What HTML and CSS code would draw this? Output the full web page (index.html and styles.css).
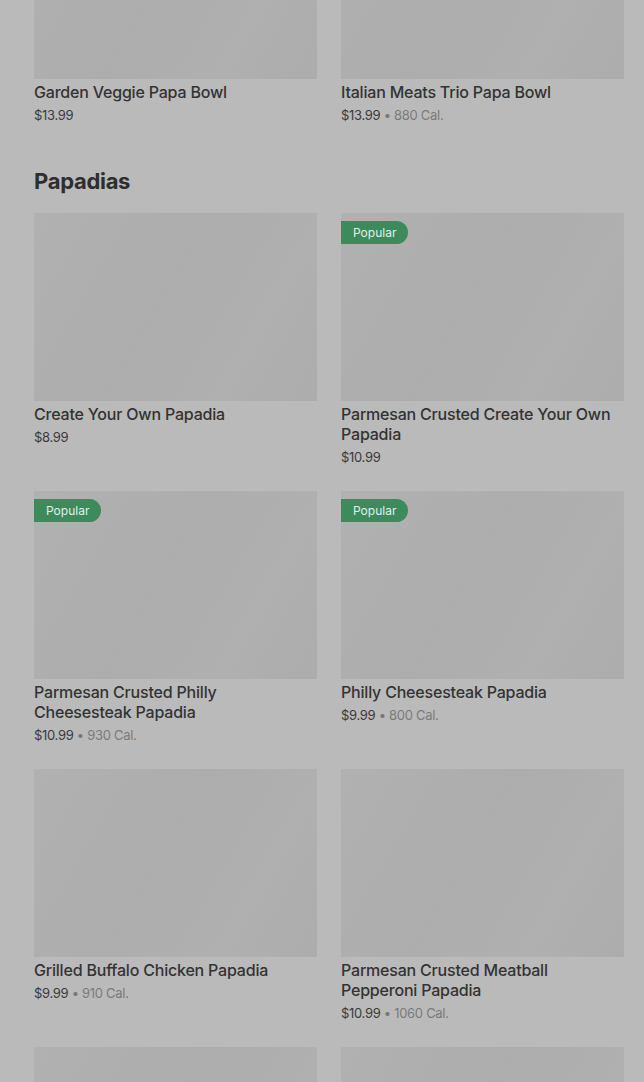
FILE: index.html
```html
<!DOCTYPE html>
<html lang="en">
<head>
  <meta charset="UTF-8">
  <meta name="viewport" content="width=device-width, initial-scale=1.0">
  <title>Papadias</title>
  <link rel="stylesheet" href="styles.css">
</head>
<body>
  <div class="menu">
    <section class="section first">
      <div class="grid">
        <div class="card">
          <div class="photo"></div>
          <div class="name">Garden Veggie Papa Bowl</div>
          <div class="meta"><span class="price">$13.99</span></div>
        </div>
        <div class="card">
          <div class="photo"></div>
          <div class="name">Italian Meats Trio Papa Bowl</div>
          <div class="meta"><span class="price">$13.99</span> • <span class="cal">880 Cal.</span></div>
        </div>
      </div>
    </section>

    <section class="section">
      <h2>Papadias</h2>
      <div class="grid">
        <div class="card">
          <div class="photo"></div>
          <div class="name">Create Your Own Papadia</div>
          <div class="meta"><span class="price">$8.99</span></div>
        </div>
        <div class="card">
          <div class="photo"><span class="badge">Popular</span></div>
          <div class="name">Parmesan Crusted Create Your Own Papadia</div>
          <div class="meta"><span class="price">$10.99</span></div>
        </div>
        <div class="card">
          <div class="photo"><span class="badge">Popular</span></div>
          <div class="name">Parmesan Crusted Philly Cheesesteak Papadia</div>
          <div class="meta"><span class="price">$10.99</span> • <span class="cal">930 Cal.</span></div>
        </div>
        <div class="card">
          <div class="photo"><span class="badge">Popular</span></div>
          <div class="name">Philly Cheesesteak Papadia</div>
          <div class="meta"><span class="price">$9.99</span> • <span class="cal">800 Cal.</span></div>
        </div>
        <div class="card">
          <div class="photo"></div>
          <div class="name">Grilled Buffalo Chicken Papadia</div>
          <div class="meta"><span class="price">$9.99</span> • <span class="cal">910 Cal.</span></div>
        </div>
        <div class="card">
          <div class="photo"></div>
          <div class="name">Parmesan Crusted Meatball Pepperoni Papadia</div>
          <div class="meta"><span class="price">$10.99</span> • <span class="cal">1060 Cal.</span></div>
        </div>
        <div class="card">
          <div class="photo"></div>
        </div>
        <div class="card">
          <div class="photo"></div>
        </div>
      </div>
    </section>
  </div>
</body>
</html>
```

FILE: styles.css
```css
body {
  margin: 0;
  background-color: #bababa;
  color: #333;
  font-family: Inter, "Liberation Sans", sans-serif;
  overflow: hidden;
}

.menu {
  padding: 0 20px 0 34px;
  margin-top: -109px;
}

.section.first {
  margin-bottom: 42px;
}

h2 {
  margin: 0 0 18px;
  font-size: 22px;
  line-height: 28px;
  font-weight: 700;
  letter-spacing: -0.3px;
  color: #2e2e2e;
}

.grid {
  display: grid;
  grid-template-columns: 1fr 1fr;
  column-gap: 24px;
  row-gap: 24px;
}

.photo {
  position: relative;
  height: 188px;
  background: linear-gradient(120deg, #b1b1b1 0%, #adadad 45%, #b0b0b0 75%, #acacac 100%);
}

.badge {
  position: absolute;
  top: 8px;
  left: 0;
  padding: 0 12px;
  height: 23px;
  line-height: 23px;
  font-size: 12px;
  color: #e4eee8;
  background-color: #3d8a5c;
  border-radius: 0 12px 12px 0;
}

.name {
  margin-top: 3px;
  font-size: 16px;
  line-height: 20px;
  font-weight: 500;
  color: #333;
  letter-spacing: -0.2px;
}

.meta {
  margin-top: 3px;
  font-size: 13px;
  line-height: 20px;
  color: #777;
  letter-spacing: -0.3px;
}

.price {
  color: #3a3a3a;
}

.cal {
  color: #7a7a7a;
}
```
